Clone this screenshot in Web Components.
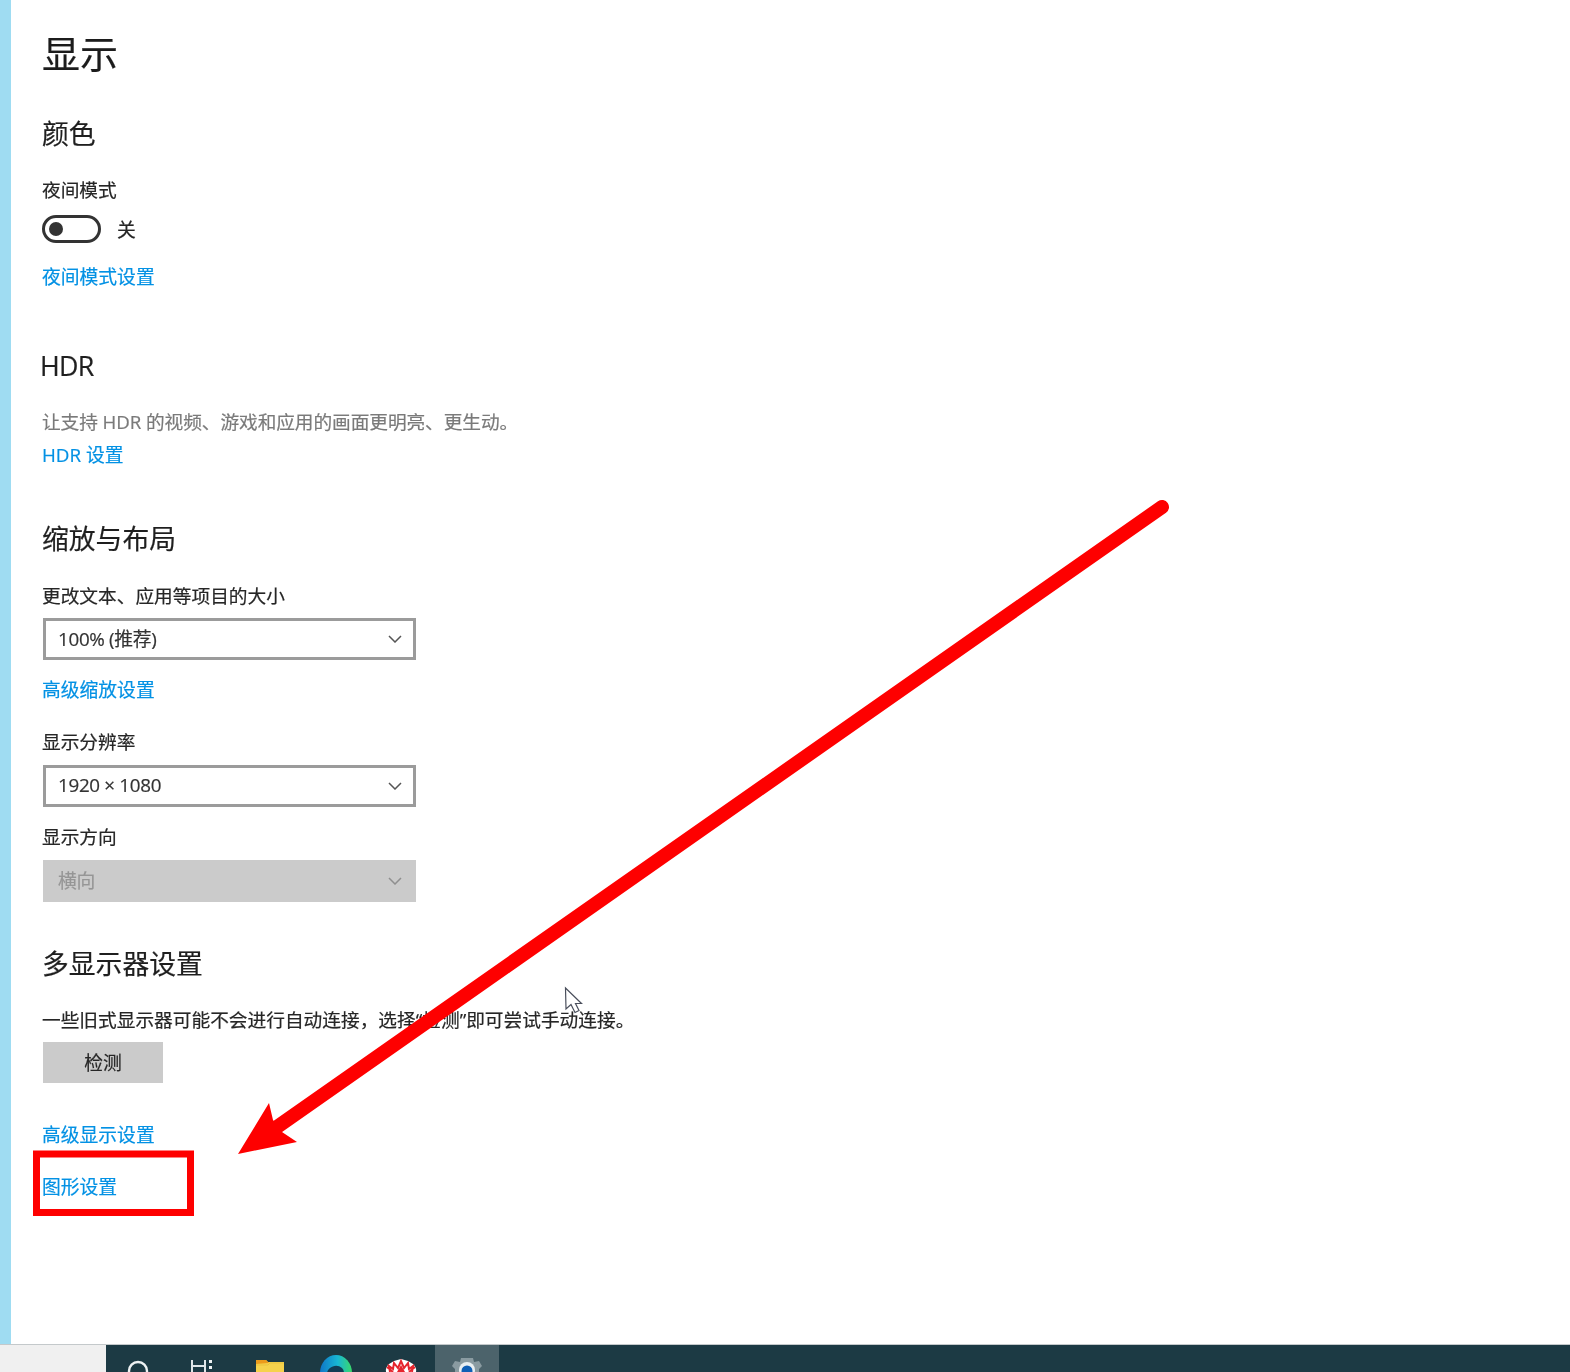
<!DOCTYPE html>
<html lang="zh-CN">
<head>
<meta charset="utf-8">
<title>显示</title>
<style>
  html, body { margin:0; padding:0; height:100%; background:#fff; overflow:hidden; }
  body { font-family:"Open Sans","Noto Sans CJK SC",sans-serif; color:#222; position:relative; }
</style>
</head>
<body>
<display-page>
  <set-text kind="title" style="margin-top:29px">显示</set-text>

  <set-text kind="head" style="margin-top:39px">颜色</set-text>
  <set-text style="margin-top:25px">夜间模式</set-text>
  <set-toggle style="margin-top:12px">关</set-toggle>
  <set-link style="margin-top:21px">夜间模式设置</set-link>

  <set-text kind="head" style="margin-top:58px;margin-left:-2px;letter-spacing:-.7px">HDR</set-text>
  <set-text kind="desc" style="margin-top:25px">让支持 HDR 的视频、游戏和应用的画面更明亮、更生动。</set-text>
  <set-link style="margin-top:7px">HDR 设置</set-link>

  <set-text kind="head" style="margin-top:53px">缩放与布局</set-text>
  <set-text style="margin-top:26px">更改文本、应用等项目的大小</set-text>
  <set-select style="margin-top:9px">100% (推荐)</set-select>
  <set-link style="margin-top:17px">高级缩放设置</set-link>
  <set-text style="margin-top:26px">显示分辨率</set-text>
  <set-select style="margin-top:10px">1920 × 1080</set-select>
  <set-text style="margin-top:17px">显示方向</set-text>
  <set-select disabled style="margin-top:10px">横向</set-select>

  <set-text kind="head" style="margin-top:44px">多显示器设置</set-text>
  <set-text style="margin-top:25px">一些旧式显示器可能不会进行自动连接，选择“检测”即可尝试手动连接。</set-text>
  <set-button style="margin-top:9px">检测</set-button>
  <set-link style="margin-top:39px">高级显示设置</set-link>
  <set-link style="margin-top:26px">图形设置</set-link>
</display-page>
<task-bar></task-bar>
<page-marks></page-marks>

<script>
class DisplayPage extends HTMLElement {
  connectedCallback() {
    this.attachShadow({mode:'open'}).innerHTML = `
      <style>
        :host { display:flex; height:1344px; background:#fff; }
        .stripe { width:11px; flex:none; background:#9fdcf2; }
        main { flex:1; padding-left:31px; filter:blur(.3px); -webkit-text-stroke:.2px; }
      </style>
      <div class="stripe"></div>
      <main><slot></slot></main>`;
  }
}

class SetText extends HTMLElement {
  connectedCallback() {
    this.attachShadow({mode:'open'}).innerHTML = `
      <style>
        :host { display:block; font-size:18.7px; line-height:26px; color:#262626; white-space:nowrap; }
        :host([kind="title"]) { font-size:38px; line-height:48px; color:#1c1c1c; }
        :host([kind="head"]) { font-size:26.8px; line-height:36px; color:#1f1f1f; }
        :host([kind="desc"]) { color:#7a7a7a; letter-spacing:-.08px; }
      </style>
      <slot></slot>`;
  }
}

class SetLink extends HTMLElement {
  connectedCallback() {
    this.attachShadow({mode:'open'}).innerHTML = `
      <style>
        :host { display:block; font-size:18.8px; line-height:26px; color:#0391e4; white-space:nowrap; }
      </style>
      <slot></slot>`;
  }
}

class SetToggle extends HTMLElement {
  connectedCallback() {
    this.attachShadow({mode:'open'}).innerHTML = `
      <style>
        :host { display:flex; align-items:center; gap:16px; height:28px; font-size:18.8px; color:#262626; }
        .track { width:59px; height:28px; box-sizing:border-box; border:3px solid #333; border-radius:14px; display:flex; align-items:center; padding-left:4px; }
        .knob { width:14px; height:14px; border-radius:50%; background:#333; }
        span { padding-bottom:1px; }
      </style>
      <div class="track"><div class="knob"></div></div>
      <span><slot></slot></span>`;
  }
}

class SetSelect extends HTMLElement {
  connectedCallback() {
    this.attachShadow({mode:'open'}).innerHTML = `
      <style>
        :host { display:flex; align-items:center; justify-content:space-between; box-sizing:border-box; width:373px; height:42px; margin-left:1px;
                padding:0 11px 0 12px; border:3px solid #9b9b9b; background:#fff; font-size:18.8px; color:#333; }
        :host([disabled]) { background:#cbcbcb; border-color:#cbcbcb; color:#969696; }
        span { padding-bottom:2px; letter-spacing:-.3px; }
        svg { width:14px; height:8px; fill:none; stroke:#555; stroke-width:1.5; }
        :host([disabled]) svg { stroke:#8f8f8f; }
      </style>
      <span><slot></slot></span>
      <svg viewBox="0 0 14 8"><path d="M1 1l6 6 6-6"/></svg>`;
  }
}

class SetButton extends HTMLElement {
  connectedCallback() {
    this.attachShadow({mode:'open'}).innerHTML = `
      <style>
        :host { display:flex; align-items:center; justify-content:center; width:120px; height:41px; margin-left:1px; padding-bottom:1px; box-sizing:border-box;
                background:#cbcbcb; font-size:18.8px; color:#262626; }
      </style>
      <slot></slot>`;
  }
}

class TaskBar extends HTMLElement {
  connectedCallback() {
    this.attachShadow({mode:'open'}).innerHTML = `
      <style>
        :host { display:flex; height:28px; box-sizing:border-box; border-top:1px solid #c4c9cb; overflow:hidden; }
        .blank { width:106px; flex:none; background:#f0f0f0; }
        .bar { flex:1; display:flex; background:#1c3a44; filter:blur(.4px); }
        .cell { width:65.6px; flex:none; display:flex; justify-content:center; }
        .cell.on { background:#4c636b; width:64px; margin-left:1px; }
        svg { width:40px; height:27px; flex:none; }
      </style>
      <div class="blank"></div>
      <div class="bar">
        <div class="cell"><svg viewBox="0 0 40 27"><circle cx="19" cy="26" r="9" fill="none" stroke="#eef2f3" stroke-width="2.4"/></svg></div>
        <div class="cell" style="margin-left:-2px"><svg viewBox="0 0 40 27"><path d="M10 15v12M23 15v12M10 21h13" fill="none" stroke="#dfe6e8" stroke-width="2"/><rect x="27" y="15" width="3" height="3" fill="#eef2f3"/><rect x="27" y="21" width="3" height="3" fill="#eef2f3"/></svg></div>
        <div class="cell" style="margin-left:2px"><svg viewBox="0 0 40 27"><path d="M6 19v-4h10l2 2h16v10H6z" fill="#f6d24c"/><path d="M6 19v-4h10l3 3z" fill="#ec9b1c"/><path d="M6 20h12l2-2h14" fill="none" stroke="#e9c23c"/></svg></div>
        <div class="cell"><svg viewBox="0 0 40 27">
          <defs><linearGradient id="edge" x1="0" x2="1" y1="0" y2="0"><stop offset="0" stop-color="#0f76c8"/><stop offset=".55" stop-color="#18b6d4"/><stop offset="1" stop-color="#3ad96a"/></linearGradient></defs>
          <path d="M4 28a16 18 0 0 1 32 0z" fill="url(#edge)"/><path d="M11 28a9 8 0 0 1 15-5q2 2 2 5z" fill="#123c55"/></svg></div>
        <div class="cell"><svg viewBox="0 0 40 27"><path d="M5 27q-1-4 3-8l5-3 7-2 7 2 5 3q4 4 3 8z" fill="#fff"/><path d="M9 27l-1-6 4 3 1-6 4 5 3-7 3 7 4-5 1 6 4-3-1 6M6 22l6 5M34 22l-6 5" fill="none" stroke="#e5252d" stroke-width="2"/><path d="M20 20l4 7h-8z" fill="#e5252d"/></svg></div>
        <div class="cell on"><svg viewBox="0 0 40 27"><path d="M14 13h12l1 4 5-1 3 5-3 3v3H8v-3l-3-3 3-5 5 1z" fill="#8a9ba1"/><circle cx="20" cy="25" r="8" fill="#e8eef0"/><circle cx="20" cy="26" r="5.5" fill="#0f5fb5"/></svg></div>
      </div>`;
  }
}

class PageMarks extends HTMLElement {
  connectedCallback() {
    this.attachShadow({mode:'open'}).innerHTML = `
      <style>
        :host { position:absolute; left:0; top:0; width:1570px; height:1372px; pointer-events:none; }
        svg { display:block; }
      </style>
      <svg width="1570" height="1372" viewBox="0 0 1570 1372">
        <path d="M1162 507L277 1127" stroke="#fe0000" stroke-width="14" stroke-linecap="round" fill="none"/>
        <path d="M238 1154L269 1103L273 1120L282 1132L297 1142Z" fill="#fe0000"/>
        <rect x="36.5" y="1154" width="154" height="58.500" fill="none" stroke="#fe0000" stroke-width="7"/>
        <path d="M565.500 988L566 1009L571 1004.500L575 1012.500L579 1010.500L575.500 1003.500L581.500 1003.500Z" fill="#fff" stroke="#4a4f5c" stroke-width="1.200"/>
      </svg>`;
  }
}

customElements.define('display-page', DisplayPage);
customElements.define('set-text', SetText);
customElements.define('set-link', SetLink);
customElements.define('set-toggle', SetToggle);
customElements.define('set-select', SetSelect);
customElements.define('set-button', SetButton);
customElements.define('task-bar', TaskBar);
customElements.define('page-marks', PageMarks);
</script>
</body>
</html>
